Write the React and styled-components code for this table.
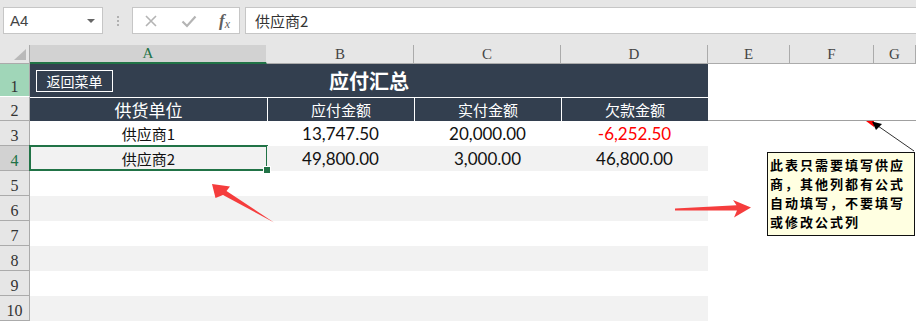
import React from "react";
import styled, { createGlobalStyle } from "styled-components";

const GlobalStyle = createGlobalStyle`
  * { box-sizing: border-box; }
  body {
    margin: 0;
    background: #ffffff;
    font-family: "Noto Sans CJK SC", sans-serif;
  }
`;

const NAVY = "#333f4f";
const GREEN = "#217346";
const LINE = "#ababab";

const rows = [
  { n: 3, name: "供应商1", vals: ["13,747.50", "20,000.00", "-6,252.50"], neg: true },
  { n: 4, name: "供应商2", vals: ["49,800.00", "3,000.00", "46,800.00"] },
  { n: 5 },
  { n: 6 },
  { n: 7 },
  { n: 8 },
  { n: 9 },
  { n: 10 },
];

const App = () => {
  return (
    <Page>
      <GlobalStyle />
      <FormulaBar>
        <NameBox>
          <span>A4</span>
          <Caret />
        </NameBox>
        <Grip>
          <i />
          <i />
          <i />
        </Grip>
        <FxButtons>
          <svg width="14" height="14" viewBox="0 0 14 14">
            <path d="M2 2 L12 12 M12 2 L2 12" stroke="#b4b4b4" strokeWidth="1.6" fill="none" />
          </svg>
          <svg width="16" height="14" viewBox="0 0 16 14">
            <path d="M1.5 7.5 L6 12 L14.5 2.5" stroke="#b4b4b4" strokeWidth="2.2" fill="none" />
          </svg>
          <Fx>
            <i>f</i>
            <sub>x</sub>
          </Fx>
        </FxButtons>
        <FormulaInput>供应商2</FormulaInput>
      </FormulaBar>

      <Sheet>
        <Corner />
        <ColHead $active>A</ColHead>
        <ColHead>B</ColHead>
        <ColHead>C</ColHead>
        <ColHead>D</ColHead>
        <ColHead>E</ColHead>
        <ColHead>F</ColHead>
        <ColHead>G</ColHead>

        <RowHead $state="hl">1</RowHead>
        <TitleCell>
          <BackButton>返回菜单</BackButton>
          应付汇总
        </TitleCell>
        <BlankCell />
        <BlankCell />
        <BlankCell />

        <RowHead>2</RowHead>
        <HeadCell $big>供货单位</HeadCell>
        <HeadCell $sep>应付金额</HeadCell>
        <HeadCell $sep>实付金额</HeadCell>
        <HeadCell $sep>欠款金额</HeadCell>
        <BlankCell $line />
        <BlankCell $line />
        <BlankCell $line />

        {rows.map((r) => {
          const stripe = r.n % 2 === 0;
          const vals = r.vals || ["", "", ""];
          return (
            <React.Fragment key={r.n}>
              <RowHead $state={r.n === 4 ? "active" : undefined}>{r.n}</RowHead>
              <DataCell $stripe={stripe} $selected={r.n === 4}>
                {r.name}
              </DataCell>
              {vals.map((v, i) => (
                <DataCell key={i} $stripe={stripe} $num $red={r.neg && i === 2}>
                  {v}
                </DataCell>
              ))}
              <BlankCell />
              <BlankCell />
              <BlankCell />
            </React.Fragment>
          );
        })}
      </Sheet>

      <Overlay width="916" height="323" viewBox="0 0 916 323">
        <polygon points="212,184 230,186.5 226.5,191 274,222.5 223,195 215.5,198" fill="#f53d3d" />
        <polygon
          points="751,207.5 733,200 736.5,205.2 675,208.6 675,210.4 737,210.6 734,217.5"
          fill="#f53d3d"
        />
        <polygon points="866,121 874,121 874,127" fill="#ff0000" />
        <line x1="914" y1="151" x2="878" y2="126" stroke="#333" strokeWidth="1" />
        <polygon points="872,121.5 882,124 876,130" fill="#000" />
      </Overlay>

      <Comment>
        <div>此表只需要填写供应</div>
        <div>商，其他列都有公式</div>
        <div>自动填写，不要填写</div>
        <div>或修改公式列</div>
      </Comment>
    </Page>
  );
};

const Page = styled.div`
  position: relative;
  width: 916px;
  height: 323px;
  overflow: hidden;
  background: #ffffff;
`;

const FormulaBar = styled.div`
  display: flex;
  align-items: center;
  height: 45px;
  padding: 7px 0 11px 3px;
  background: #e6e6e6;
`;

const Box = styled.div`
  height: 27px;
  background: #ffffff;
  border: 1px solid #c6c6c6;
  display: flex;
  align-items: center;
`;

const NameBox = styled(Box)`
  width: 100px;
  justify-content: space-between;
  padding: 0 6px 0 6px;
  font-family: "Liberation Sans", sans-serif;
  font-size: 15px;
  color: #444;
`;

const Caret = styled.span`
  width: 0;
  height: 0;
  border-left: 4px solid transparent;
  border-right: 4px solid transparent;
  border-top: 4px solid #666;
  margin-right: 1px;
`;

const Grip = styled.div`
  display: flex;
  flex-direction: column;
  gap: 2px;
  margin: 0 13px 0 14px;

  i {
    display: block;
    width: 2px;
    height: 2px;
    background: #b0b0b0;
  }
`;

const FxButtons = styled(Box)`
  width: 108px;
  justify-content: space-between;
  padding: 0 9px 0 11px;
`;

const Fx = styled.span`
  font-family: "Liberation Serif", serif;
  font-style: italic;
  font-size: 17px;
  color: #606060;
  line-height: 1;

  i {
    font-weight: 600;
  }

  sub {
    font-size: 12px;
    vertical-align: -2px;
  }
`;

const FormulaInput = styled(Box)`
  flex: 1;
  margin-left: 5px;
  padding-left: 9px;
  font-size: 15px;
  color: #333;
  border-right: none;
`;

const Sheet = styled.div`
  display: grid;
  grid-template-columns: 30px 237px 147px 147px 147px 82px 84px 42px;
  grid-template-rows: 19px 33px 24px repeat(8, 25px);
`;

const Corner = styled.div`
  position: relative;
  background: #e6e6e6;
  border-right: 1px solid ${LINE};
  border-bottom: 1px solid ${LINE};

  &::after {
    content: "";
    position: absolute;
    right: 3px;
    bottom: 3px;
    width: 12px;
    height: 11px;
    background: #b9b9b9;
    clip-path: polygon(100% 0, 100% 100%, 0 100%);
  }
`;

const ColHead = styled.div`
  display: flex;
  align-items: flex-end;
  justify-content: center;
  padding-bottom: 1px;
  font-family: "Liberation Serif", serif;
  font-size: 15px;
  line-height: 16px;
  color: ${(p) => (p.$active ? GREEN : "#444")};
  background: ${(p) => (p.$active ? "#d2d2d2" : "#e6e6e6")};
  border-right: 1px solid ${(p) => (p.$active ? "#e6e6e6" : LINE)};
  border-bottom: ${(p) => (p.$active ? `2px solid ${GREEN}` : `1px solid ${LINE}`)};
`;

const rowHeadBg = { active: "#d2d2d2", hl: "#a0d6b8" };

const RowHead = styled.div`
  display: flex;
  align-items: flex-end;
  justify-content: center;
  padding-bottom: 1px;
  font-family: "Liberation Serif", serif;
  font-size: 16px;
  line-height: 17px;
  color: ${(p) => (p.$state === "active" ? GREEN : "#333")};
  background: ${(p) => rowHeadBg[p.$state] || "#e6e6e6"};
  border-right: 1px solid ${LINE};
  border-bottom: 1px solid ${(p) => (p.$state === "hl" ? "#ffffff" : LINE)};
`;

const TitleCell = styled.div`
  grid-column: 2 / 6;
  position: relative;
  display: flex;
  align-items: center;
  justify-content: center;
  background: ${NAVY};
  color: #ffffff;
  font-size: 20px;
  font-weight: 700;
`;

const BackButton = styled.div`
  position: absolute;
  left: 6px;
  top: 6px;
  width: 77px;
  height: 22px;
  border: 1px solid #ffffff;
  display: flex;
  align-items: center;
  justify-content: center;
  font-size: 14px;
  font-weight: 400;
`;

const HeadCell = styled.div`
  display: flex;
  align-items: center;
  justify-content: center;
  background: ${NAVY};
  color: #ffffff;
  font-size: ${(p) => (p.$big ? "17px" : "15px")};
  border-top: 1px solid #ffffff;
  border-left: ${(p) => (p.$sep ? "1px solid #ffffff" : "none")};
`;

const BlankCell = styled.div`
  background: #ffffff;
  border-bottom: ${(p) => (p.$line ? "1px solid #a0a0a0" : "none")};
`;

const DataCell = styled.div`
  position: relative;
  display: flex;
  align-items: center;
  justify-content: center;
  background: ${(p) => (p.$stripe ? "#f2f2f2" : "#ffffff")};
  font-family: ${(p) => (p.$num ? `Lato, "Noto Sans CJK SC", sans-serif` : `"Noto Sans CJK SC", sans-serif`)};
  font-size: ${(p) => (p.$num ? "17px" : "15px")};
  color: ${(p) => (p.$red ? "#ff0000" : "#111")};

  ${(p) =>
    p.$selected &&
    `
    &::after {
      content: "";
      position: absolute;
      inset: -1px -1px 0 -1px;
      border: 2px solid ${GREEN};
    }
    &::before {
      content: "";
      position: absolute;
      right: -4px;
      bottom: -3px;
      width: 6px;
      height: 6px;
      background: ${GREEN};
      border: 1px solid #ffffff;
      z-index: 1;
    }
  `}
`;

const Overlay = styled.svg`
  position: absolute;
  left: 0;
  top: 0;
  pointer-events: none;
`;

const Comment = styled.div`
  position: absolute;
  left: 767px;
  top: 152px;
  width: 148px;
  height: 84px;
  padding: 2px 0 0 2px;
  background: #ffffe1;
  border: 1px solid #111;
  font-size: 13px;
  letter-spacing: 2px;
  font-weight: 700;
  line-height: 19px;
  color: #000;
  white-space: nowrap;
`;

export default App;
